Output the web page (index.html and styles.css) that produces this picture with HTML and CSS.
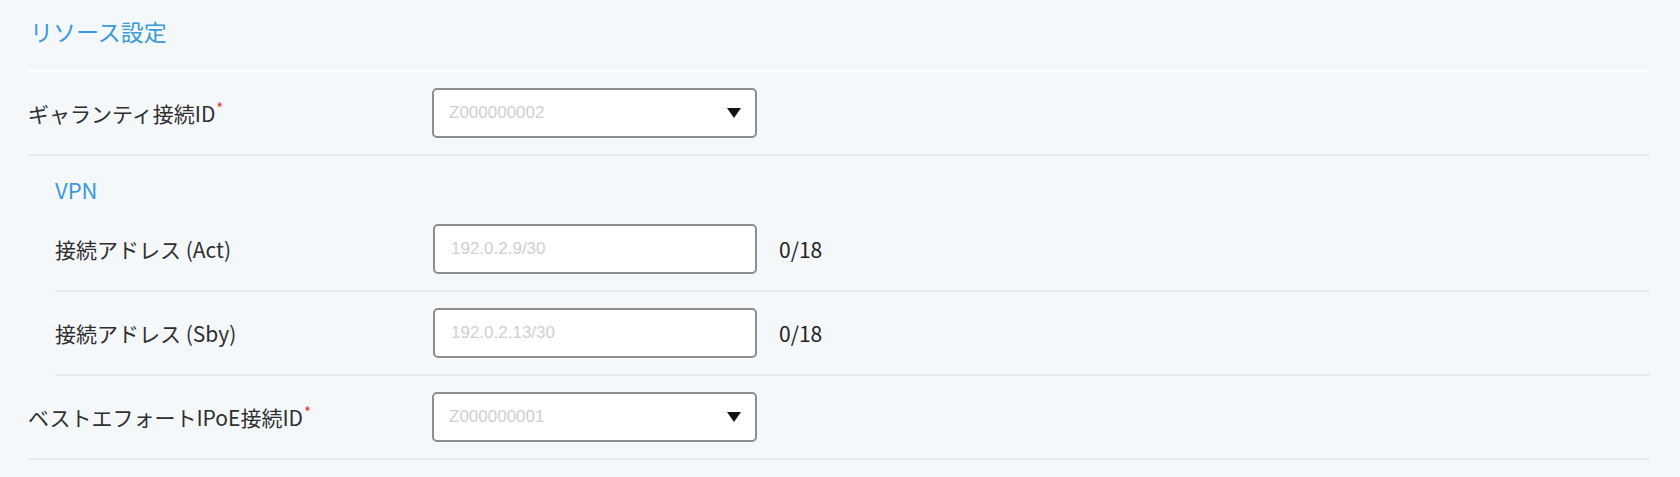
FILE: index.html
```html
<!DOCTYPE html>
<html lang="ja">
<head>
    <meta charset="UTF-8">
    <meta name="viewport" content="width=device-width, initial-scale=1.0">
    <title>リソース設定</title>
    <link rel="stylesheet" href="styles.css">
</head>
<body>
    <div class="section">
        <h2 class="section-title">リソース設定</h2>

        <div class="row">
            <label class="label">ギャランティ接続ID<span class="req">*</span></label>
            <div class="select">
                <span class="placeholder">Z000000002</span>
                <svg class="caret" width="14" height="10" viewBox="0 0 14 10"><polygon points="0,0 14,0 7,10" fill="#111"/></svg>
            </div>
        </div>

        <div class="group">
            <h3 class="group-title">VPN</h3>
            <div class="row">
                <label class="label">接続アドレス (Act)</label>
                <input class="input" type="text" placeholder="192.0.2.9/30">
                <span class="counter">0/18</span>
            </div>
            <div class="row">
                <label class="label">接続アドレス (Sby)</label>
                <input class="input" type="text" placeholder="192.0.2.13/30">
                <span class="counter">0/18</span>
            </div>
        </div>

        <div class="row">
            <label class="label">ベストエフォートIPoE接続ID<span class="req">*</span></label>
            <div class="select">
                <span class="placeholder">Z000000001</span>
                <svg class="caret" width="14" height="10" viewBox="0 0 14 10"><polygon points="0,0 14,0 7,10" fill="#111"/></svg>
            </div>
        </div>
    </div>
</body>
</html>
```

FILE: styles.css
```css
* {
    margin: 0;
    padding: 0;
    box-sizing: border-box;
}

body {
    background-color: #f5f8fb;
    font-family: "Noto Sans CJK JP", "Noto Sans", sans-serif;
    color: #333;
}

.section {
    padding: 0 30px 0 28px;
}

.section-title {
    font-size: 23px;
    font-weight: 400;
    line-height: 26px;
    color: #3a9bd8;
    padding: 18px 0 26px 2px;
    border-bottom: 2px solid #ffffff;
}

.row {
    display: flex;
    align-items: center;
    padding: 16px 0 16px;
    border-bottom: 2px solid #e6e9ed;
}

.label {
    width: 404px;
    font-size: 21px;
    line-height: 28px;
    color: #2f2f2f;
}

.req {
    color: #e53935;
    font-size: 15px;
    vertical-align: top;
    line-height: 18px;
    margin-left: 1px;
}

.select {
    width: 325px;
    height: 50px;
    display: flex;
    align-items: center;
    justify-content: space-between;
    padding: 0 14px 0 15px;
    background: #fff;
    border: 2px solid #8e8e8e;
    border-radius: 5px;
}

.placeholder {
    font-family: "Liberation Sans", Arial, sans-serif;
    font-size: 17px;
    color: #cfcfcf;
}

.group {
    padding-left: 27px;
}

.group-title {
    font-size: 22px;
    font-weight: 400;
    line-height: 28px;
    color: #3a9bd8;
    padding: 19px 0 5px;
}

.group .label {
    width: 378px;
}

.input {
    width: 324px;
    height: 50px;
    padding: 0 16px;
    background: #fff;
    border: 2px solid #8e8e8e;
    border-radius: 5px;
    font-family: "Liberation Sans", Arial, sans-serif;
    font-size: 17px;
    outline: none;
}

.input::placeholder {
    color: #cfcfcf;
}

.counter {
    margin-left: 22px;
    font-size: 21px;
    color: #222;
}
```
